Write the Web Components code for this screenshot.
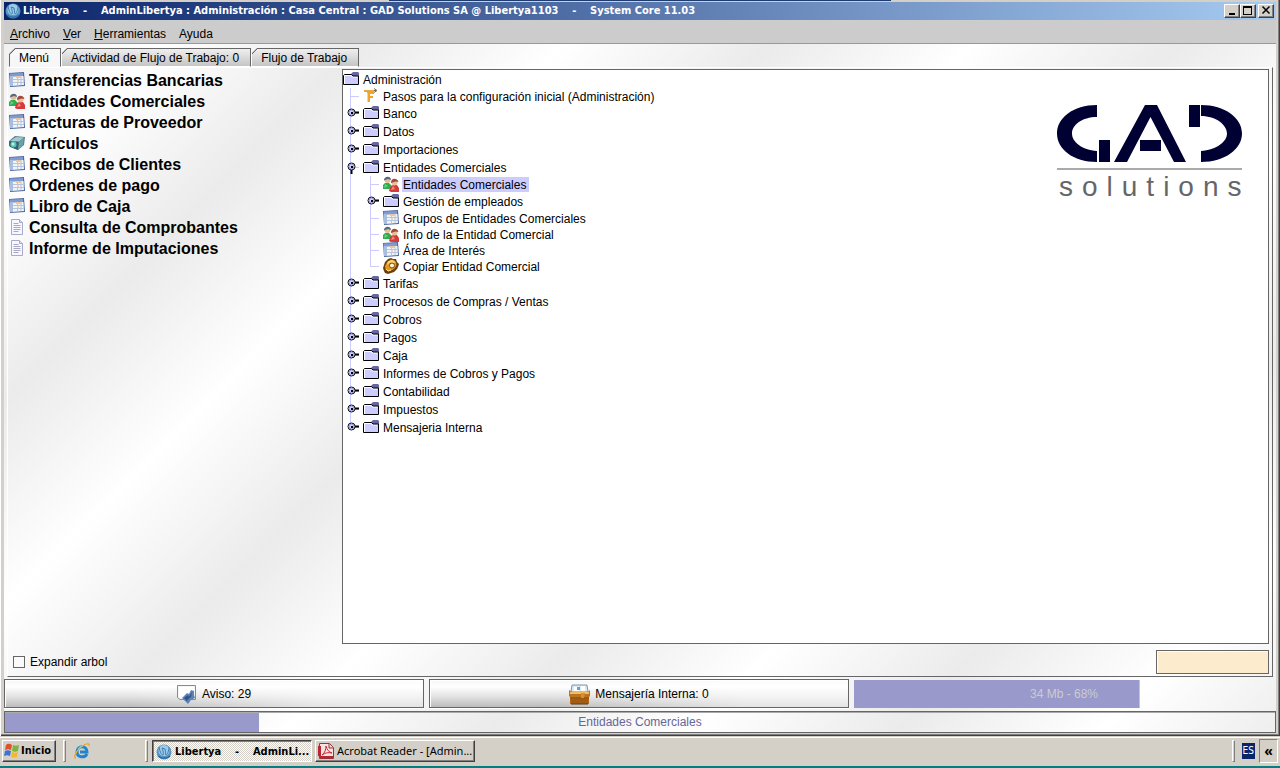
<!DOCTYPE html>
<html lang="es">
<head>
<meta charset="utf-8">
<title>Libertya</title>
<style>
html, body { margin: 0; height: 100%; }
body { background: #008080; font: 12px/16px "Liberation Sans", Arial, sans-serif; color: #000; overflow: hidden; }
</style>
</head>
<body>
<lib-desktop></lib-desktop>

<script>
const ICONS = {
  folder: `<svg viewBox="0 0 16 16" width="16" height="16"><path d="M9 2l1-1h5l1 1v3H8V3z" fill="#6666a0"/><path d="M0.500 14V4.500l1-1h7l1 1.500h6V14z" fill="#ccccff"/><path d="M1.500 13V4.500h6.500l1.500 1.500h5" fill="none" stroke="#fff"/><path d="M0.500 13.500V4.500l1-1h7l1.500 1.500h5.500v8.500z" fill="none" stroke="#000"/></svg>`,
  flow: `<svg viewBox="0 0 16 16" width="16" height="16"><path d="M1 2.500h12M11 .5l3 2-3 2" fill="none" stroke="#776a55"/><path d="M1 3h10" stroke="#e8a640" stroke-width="2"/><path d="M4 4h7v2H7v2h3v2H7v4H4z" fill="#f0a42a"/><path d="M4.500 5v9" stroke="#ffd28a"/></svg>`,
  form: `<svg viewBox="0 0 16 16" width="16" height="16"><path d="M0 1L15 0l1 14L1 15z" fill="#4f69a2"/><path d="M1 1.500l13-.5v3L1 4z" fill="#7f9ad4"/><path d="M2 4.500L14.500 4l.5 9-12.500 1z" fill="#f0f4fa"/><path d="M1 4h3v10H1z" fill="#a9bddf"/><path d="M4 7.500h11M4 10.500h11M8.500 4.500v9M12 4.500v8.500" stroke="#b7c4da"/><path d="M7 4h5v2H7z" fill="#e6c9a0"/><path d="M8 8h2v2H8z" fill="#ecd9a9"/></svg>`,
  people: `<svg viewBox="0 0 16 16" width="16" height="16"><path d="M0 13V9l2-2 4 0 3 3v3z" fill="#2fae50"/><path d="M1 12l1-4 3 2z" fill="#65d07a"/><circle cx="4.500" cy="4" r="3" fill="#e9bc98"/><path d="M1 4.500C.5 0 8-1 8 4L5 3z" fill="#556b82"/><path d="M6 15l1-4 3-2h4l2 3v4H8z" fill="#d63b3b"/><path d="M8 14l2-4 2 3z" fill="#f28c80"/><circle cx="11.500" cy="6.500" r="3" fill="#edbd96"/><path d="M8 7C7.500 2 14 1 15.500 6l-3-.5z" fill="#a3483d"/></svg>`,
  product: `<svg viewBox="0 0 16 16" width="16" height="16"><path d="M0 6l6-5 10 1-1 8-6 5-9-4z" fill="#4c7f8c"/><path d="M1 6l6-4 8 .5-5 4z" fill="#a6c9cf"/><path d="M0 6.500l10 .5-1 8-8-3z" fill="#34616e"/><path d="M10 7l5-4-1 7-5 5z" fill="#6aa2aa"/><circle cx="4.500" cy="9.500" r="3" fill="#56c4b4"/><circle cx="4" cy="9" r="1.500" fill="#bdeee2"/></svg>`,
  page: `<svg viewBox="0 0 16 16" width="16" height="16"><path d="M2.500.5h8l3 3v12h-11z" fill="#f7f7ff" stroke="#a9a9cb"/><path d="M10.500.5v3h3" fill="#d8d8f0" stroke="#a9a9cb"/><path d="M4.500 4.500h5M4.500 6.500h7M4.500 8.500h7M4.500 10.500h7M4.500 12.500h5" stroke="#a8a8c4"/></svg>`,
  gear: `<svg viewBox="0 0 16 16" width="16" height="16"><path d="M5 1l3-1 2 1h3l1 3 2 2-1 3-1 2-3 3-3 1-3 1-3-1-1-2-1-3 1-3 1-3z" fill="#6b3c0c"/><path d="M8 1.500l3 .5 2 2 .5 3-1.500 3-2.500 2-4 1.500-3-2L2 8l2.500-4.500z" fill="#dc9a22"/><path d="M5 3.500l4-1.500 3 2-1 1-4-.5-3 2.500z" fill="#ffdc76"/><circle cx="9" cy="7.500" r="2.500" fill="#fff3d6" stroke="#7b4a10"/><path d="M3 11l2 2 3-1" stroke="#ffe089" fill="none"/></svg>`,
  globe: `<svg viewBox="0 0 16 16" width="16" height="16"><circle cx="8" cy="8" r="7.500" fill="#5596c6"/><circle cx="8" cy="6.500" r="5.500" fill="#9ccbea"/><path d="M3 3c1 6 3 8 4 8s0-5-1-7l3 1c1 3 0 6 1 6s3-4 3-8" fill="none" stroke="#3f7cab" stroke-width="1"/><path d="M2 12c3 3 9 3 12 0" stroke="#2d6da0" fill="none" stroke-width="1.500"/></svg>`,
  notice: `<svg viewBox="0 0 20 20" width="20" height="20"><path d="M.5 1.500h18v14H3l-2.500-2z" fill="#f5f6f8" stroke="#858b92"/><path d="M2 3h15v8L2 13z" fill="#fff"/><path d="M5 14l5-5 2 1 2-4 3 1v4l1 3-4 2-3 4-3-3z" fill="#5d83b4"/><path d="M7 14l4-3 1 2 3-5-1 5-3 2-1 2z" fill="#2e5386"/></svg>`,
  mailbox: `<svg viewBox="0 0 21 21" width="21" height="21"><path d="M3 1h15l1 7H2z" fill="#dce8f2" stroke="#8095a8"/><path d="M5 3h5v4H5zM12 2h4v5h-4z" fill="#fff"/><path d="M8 3h3v3H8z" fill="#6ba0cb"/><path d="M0 6l3 2h16l2-2v6l-1 1v7H1v-7l-1-1z" fill="#bd741c"/><path d="M1 8h19v2H1z" fill="#f0bd60"/><path d="M1 14h19" stroke="#74400b"/><path d="M1.500 15h18v4.500h-18z" fill="#a45c13"/><path d="M12 9h4l-1 5h-3z" fill="#db8e2d"/><path d="M2 20h17" stroke="#593209"/></svg>`,
  winflag: `<svg viewBox="0 0 16 16" width="16" height="16"><path d="M2 2c2-2 4-1 6 0L7 7C5 6 3 6 1 7z" fill="#e0512b"/><path d="M9 2c2 1 4 1 6 0l-1 6c-2 1-4 1-6 0z" fill="#7cb53b"/><path d="M1 8c2-1 3-1 6 0l-1 5c-2-1-4-1-6 0z" fill="#3d74cf"/><path d="M8 9c2 1 4 1 6 0l-1 5c-2 1-4 1-6 0z" fill="#f2b92e"/></svg>`,
  ie: `<svg viewBox="0 0 16 16" width="16" height="16"><path d="M13 11c-2 4-10 4-10-2 0-7 10-7 10 0H6" fill="none" stroke="#2284cc" stroke-width="3"/><path d="M2 15c-3 0 0-7 5-11s9-4 8-1" fill="none" stroke="#e6ae28" stroke-width="1.500"/><path d="M4 6c1-2 3-3 5-3" stroke="#82ccec" fill="none"/></svg>`,
  acrobat: `<svg viewBox="0 0 16 16" width="16" height="16"><path d="M1.500.5h10l4 4v11h-14z" fill="#f6e4e4" stroke="#96343a"/><path d="M0 3h3v10H0z" fill="#b8272d"/><path d="M2 13h13v2H2z" fill="#b8272d"/><path d="M11 1v4h4" fill="#ddd" stroke="#96343a"/><path d="M4 12c3-2 4-6 4-9 1 4 3 6 6 7-4-1-7 0-10 2z" fill="none" stroke="#c42b30"/></svg>`,
  min: `<svg viewBox="0 0 12 10" width="12" height="10"><path d="M3 8h6v2H3z"/></svg>`,
  max: `<svg viewBox="0 0 12 10" width="12" height="10"><path d="M1 1h9v9H1zM2 3v6h7V3z" fill-rule="evenodd"/></svg>`,
  close: `<svg viewBox="0 0 12 10" width="12" height="10"><path d="M2.500 1.500l7 7M9.500 1.500l-7 7" stroke="#000" stroke-width="1.500"/></svg>`,
  handle: `<svg viewBox="0 0 14 9" width="14" height="9"><path d="M8 4.500h4" stroke="#000" stroke-width="2"/><circle cx="4.500" cy="4.500" r="3.500" fill="#ccccff" stroke="#000"/><circle cx="4.500" cy="4.500" r="2.500" fill="none" stroke="#9999cc"/><path d="M4 4h2v2H4z"/></svg>`,
  handleopen: `<svg viewBox="0 0 9 14" width="9" height="14"><path d="M4.500 8v4" stroke="#000" stroke-width="2"/><circle cx="4.500" cy="4.500" r="3.500" fill="#ccccff" stroke="#000"/><circle cx="4.500" cy="4.500" r="2.500" fill="none" stroke="#9999cc"/><path d="M4 4h2v2H4z"/></svg>`
};

function define(name, html, setup) {
  const tpl = document.createElement('template');
  tpl.innerHTML = html;
  customElements.define(name, class extends HTMLElement {
    connectedCallback() {
      if (this.shadowRoot) return;
      const root = this.attachShadow({ mode: 'open' });
      root.append(tpl.content.cloneNode(true));
      if (setup) setup(this, root);
    }
  });
}

define('lib-icon', `<style>:host{display:inline-flex;flex:none} svg{display:block}</style><span></span>`,
  (el, root) => { root.querySelector('span').innerHTML = ICONS[el.getAttribute('name')]; });

define('lib-titlebar', `<style>
  :host{display:flex;align-items:center;height:18px;padding:0 2px 0 1px;gap:2px;color:#fff;
    background:linear-gradient(90deg,#0a246a,#a6caf0);font:bold 11px/18px "DejaVu Sans Condensed","DejaVu Sans",sans-serif}
  h1{margin:0;flex:1;font:inherit;white-space:pre;overflow:hidden}
  .controls{display:flex}
  button{box-sizing:border-box;width:16px;height:14px;padding:0 0 0 1px;display:flex;background:#d4d0c8;
    border:1px solid;border-color:#fff #404040 #404040 #fff;box-shadow:inset -1px -1px #808080}
  button:last-child{margin-left:2px}
</style>
<lib-icon name="globe"></lib-icon><h1><slot></slot></h1>
<div class="controls">
  <button aria-label="Minimizar"><lib-icon name="min"></lib-icon></button>
  <button aria-label="Maximizar"><lib-icon name="max"></lib-icon></button>
  <button aria-label="Cerrar"><lib-icon name="close"></lib-icon></button>
</div>`);

define('lib-menubar', `<style>
  :host{display:flex;height:23px;background:#ccc;border-bottom:1px solid #999;padding-left:6px;gap:13px}
  button{border:0;background:none;padding:2px 0 0;font:12px/24px "Liberation Sans",Arial,sans-serif;color:#000}
  u{text-underline-offset:1px}
</style>
<button><u>A</u>rchivo</button><button><u>V</u>er</button><button><u>H</u>erramientas</button><button>Ayuda</button>`);

define('lib-tabs', `<style>
  :host{display:flex;height:19px;padding:4px 0 0 5px}
  button{box-sizing:border-box;height:19px;border:1px solid #666;border-bottom-color:#fff;border-left-color:#fff;padding:1px 11px 0 9px;
    font:12px/17px "Liberation Sans",Arial,sans-serif;color:#000;
    background:linear-gradient(135deg,transparent 4px,#666 4px 5px,transparent 5px) border-box,linear-gradient(#f2f2f2,#c2c2c2) border-box;
    clip-path:polygon(6px 0,100% 0,100% 100%,0 100%,0 6px)}
  button[aria-selected=true]{border-bottom-color:transparent;border-left-color:#666;
    background:linear-gradient(135deg,transparent 4px,#666 4px 5px,transparent 5px) border-box,#f7f7f7 border-box}
</style>
<button role="tab" aria-selected="true">Menú</button><button role="tab">Actividad de Flujo de Trabajo: 0</button><button role="tab">Flujo de Trabajo</button>`);

define('lib-favorite', `<style>
  :host{display:block}
  a{display:flex;align-items:center;gap:4px;height:21px;color:#000;text-decoration:none;font:bold 16px/20px "Liberation Sans",Arial,sans-serif;white-space:nowrap}
  span{padding-top:2px}
</style><a href="#"><lib-icon></lib-icon><span><slot></slot></span></a>`,
  (el, root) => {
    const icon = document.createElement('lib-icon');
    icon.setAttribute('name', el.getAttribute('icon'));
    root.querySelector('lib-icon').replaceWith(icon);
  });

define('tree-node', `<style>
  :host{display:block;background:linear-gradient(#ccccff,#ccccff) 7px 0/1px 100% no-repeat}
  :host(:last-child){background-size:1px 9px}
  :host([root]){background:none}
  .row{display:flex;align-items:center;height:16px}
  :host([icon=folder]) .row{height:18px}
  .lead{width:20px;height:100%;flex:none;display:flex;align-items:center;
    background:linear-gradient(#ccccff,#ccccff) 8px 50%/8px 1px no-repeat}
  .lead lib-icon{padding:0 0 2px 4px}
  .lead lib-icon[name=handleopen]{padding:5px 0 2px 4px}
  :host([root]) .lead{display:none}
  .label{margin-left:3px;padding:2px 3px 0 1px;line-height:13px;white-space:nowrap}
  :host([selected]) .label{background:#ccccff}
  .kids{margin-left:20px}
  :host([root]) .kids{margin-left:0}
</style>
<div class="row" role="treeitem"><span class="lead"></span><span class="label"></span></div>
<div class="kids" role="group"><slot></slot></div>`,
  (el, root) => {
    const add = (name, parent, before) => {
      const i = document.createElement('lib-icon');
      i.setAttribute('name', name);
      parent.insertBefore(i, before);
    };
    const row = root.querySelector('.row'), label = root.querySelector('.label');
    label.textContent = el.getAttribute('label');
    add(el.getAttribute('icon'), row, label);
    if (el.getAttribute('icon') === 'folder' && !el.hasAttribute('root'))
      add(el.hasAttribute('open') ? 'handleopen' : 'handle', root.querySelector('.lead'), null);
  });

define('gad-logo', `<style>
  :host{display:block;width:190px}
  svg{display:block}
  .word{display:block;font:28px/34px "Liberation Sans",Arial,sans-serif;letter-spacing:9px;color:#666;white-space:nowrap;padding-left:2px}
</style>
<svg width="186" height="65" viewBox="0 0 186 65" fill="#000033" role="img" aria-label="GAD">
  <path d="M40 0v12C25 12 15 20 15 28.500S25 45 40 46v11C16 57 0 44 0 28.500S16 0 40 0z"/>
  <path d="M42 35h11v22H42z"/>
  <path d="M88 0h12l29 57h-12L93.500 12 70 57H57z"/>
  <path d="M83 35h21v11H83z"/>
  <path d="M132 0h11v22h-11z"/>
  <path d="M144 0c24 0 41 13 41 28.500S168 57 144 57V46c15-1 26-9 26-17.500S159 11 144 11z"/>
  <path d="M0 63h185v2H0z" fill="#aaa"/>
</svg>
<span class="word">solutions</span>`);

define('lib-workspace', `<style>
  :host{display:flex;flex-direction:column;min-height:0;border:1px solid;border-color:#fff #666 #666 #fff;padding:1px 3px 2px 1px;margin:0 3px 2px 3px}
  .main{flex:1;min-height:0;display:grid;grid-template-columns:333px minmax(0,1fr)}
  nav{display:block}
  .tree{border:1px solid #666;background:#fff;display:flex;justify-content:space-between;align-items:flex-start;overflow:hidden}
  gad-logo{margin:35px 21px 0 0;flex:none}
  .foot{display:flex;align-items:center;justify-content:space-between;padding-top:6px}
  label{display:flex;align-items:center;gap:5px;padding-left:4px}
  input[type=checkbox]{appearance:none;box-sizing:border-box;margin:0;width:12px;height:12px;border:1px solid #666;background:#fafafa}
  input[type=text]{box-sizing:border-box;width:113px;height:24px;border:1px solid #666;background:#fdebcd;box-shadow:inset 1px 1px #fff}
</style>
<div class="main">
<nav aria-label="Favoritos">
  <lib-favorite icon="form">Transferencias Bancarias</lib-favorite>
  <lib-favorite icon="people">Entidades Comerciales</lib-favorite>
  <lib-favorite icon="form">Facturas de Proveedor</lib-favorite>
  <lib-favorite icon="product">Artículos</lib-favorite>
  <lib-favorite icon="form">Recibos de Clientes</lib-favorite>
  <lib-favorite icon="form">Ordenes de pago</lib-favorite>
  <lib-favorite icon="form">Libro de Caja</lib-favorite>
  <lib-favorite icon="page">Consulta de Comprobantes</lib-favorite>
  <lib-favorite icon="page">Informe de Imputaciones</lib-favorite>
</nav>
<div class="tree" role="tree">
  <tree-node root open icon="folder" label="Administración">
    <tree-node icon="flow" label="Pasos para la configuración inicial (Administración)"></tree-node>
    <tree-node icon="folder" label="Banco"></tree-node>
    <tree-node icon="folder" label="Datos"></tree-node>
    <tree-node icon="folder" label="Importaciones"></tree-node>
    <tree-node icon="folder" open label="Entidades Comerciales">
      <tree-node icon="people" selected label="Entidades Comerciales"></tree-node>
      <tree-node icon="folder" label="Gestión de empleados"></tree-node>
      <tree-node icon="form" label="Grupos de Entidades Comerciales"></tree-node>
      <tree-node icon="people" label="Info de la Entidad Comercial"></tree-node>
      <tree-node icon="form" label="Área de Interés"></tree-node>
      <tree-node icon="gear" label="Copiar Entidad Comercial"></tree-node>
    </tree-node>
    <tree-node icon="folder" label="Tarifas"></tree-node>
    <tree-node icon="folder" label="Procesos de Compras / Ventas"></tree-node>
    <tree-node icon="folder" label="Cobros"></tree-node>
    <tree-node icon="folder" label="Pagos"></tree-node>
    <tree-node icon="folder" label="Caja"></tree-node>
    <tree-node icon="folder" label="Informes de Cobros y Pagos"></tree-node>
    <tree-node icon="folder" label="Contabilidad"></tree-node>
    <tree-node icon="folder" label="Impuestos"></tree-node>
    <tree-node icon="folder" label="Mensajeria Interna"></tree-node>
  </tree-node>
  <gad-logo></gad-logo>
</div>
</div>
<div class="foot">
  <label><input type="checkbox">Expandir arbol</label>
  <input type="text" aria-label="Buscar">
</div>`);

define('lib-status', `<style>
  :host{display:block}
  .cells{display:grid;grid-template-columns:repeat(3,minmax(0,1fr));gap:5px;height:29px;padding-right:2px}
  button{display:flex;align-items:center;justify-content:center;gap:5px;padding:1px 0 0;color:#000;
    font:12px/16px "Liberation Sans",Arial,sans-serif;border:1px solid #666;box-shadow:inset 1px 1px #fff,0 1px #fff;
    background:linear-gradient(90deg,transparent 30%,rgba(255,255,255,.6) 75%),linear-gradient(#f6f6f6,#fff 25%,#e4e4e4 60%,#bcbcbc)}
  .mem{margin-top:1px;display:flex;align-items:center;justify-content:center;color:#ccc;
    background:linear-gradient(#9999cc,#9999cc) 0 0/68% 100% no-repeat}
  .bar{display:flex;align-items:center;justify-content:center;margin-top:3px;height:20px;border:1px solid #666;color:#666699;
    box-shadow:inset 0 1px #aaa;background:linear-gradient(#9999cc,#9999cc) 0 0/20% 100% no-repeat}
</style>
<div class="cells">
  <button><lib-icon name="notice"></lib-icon>Aviso: 29</button>
  <button><lib-icon name="mailbox"></lib-icon>Mensajería Interna: 0</button>
  <div class="mem" role="meter" aria-label="Memoria" aria-valuenow="68">34 Mb - 68%</div>
</div>
<div class="bar" role="status">Entidades Comerciales</div>`);

define('lib-window', `<style>
  :host{display:flex;flex-direction:column;min-height:0;background:#d4d0c8;padding:2px 4px 3px;box-shadow:inset 1px 0 #fff,inset -1px -1px #404040,inset -2px -2px #808080}
  .client{flex:1;min-height:0;display:flex;flex-direction:column;
    background:repeating-linear-gradient(135deg,#ffffff -178px,#ebebeb -34px,#ffffff 110px)}
  lib-workspace{flex:1}
</style>
<lib-titlebar>Libertya    -    AdminLibertya : Administración : Casa Central : GAD Solutions SA @ Libertya1103    -    System Core 11.03</lib-titlebar>
<lib-menubar></lib-menubar>
<div class="client">
  <lib-tabs></lib-tabs>
  <lib-workspace></lib-workspace>
  <lib-status></lib-status>
</div>`);

define('lib-taskbar', `<style>
  :host{box-sizing:border-box;display:flex;align-items:center;height:30px;padding:0 2px;background:#d4d0c8;box-shadow:inset 0 1px #d4d0c8,inset 0 2px #fff;
    font:11px/16px "Noto Sans","DejaVu Sans Condensed",sans-serif}
  button{box-sizing:border-box;height:22px;display:flex;align-items:center;gap:3px;padding:0 2px;background:#d4d0c8;color:#000;font:inherit;white-space:pre;
    border:1px solid;border-color:#fff #404040 #404040 #fff;box-shadow:inset -1px -1px #808080}
  .start{width:54px;gap:1px;padding:0 1px;font:bold 11px/16px "DejaVu Sans Condensed",sans-serif}
  .tasks{display:flex;gap:3px;margin-left:4px;flex:1}
  .task{width:160px;padding:0 2px}
  .task[aria-pressed]{border-color:#404040 #fff #fff #404040;box-shadow:inset 1px 1px #808080;padding:1px 3px 0;font:bold 11px/16px "DejaVu Sans Condensed",sans-serif;
    background:repeating-conic-gradient(#fff 0 25%,#d4d0c8 0 50%) 0 0/2px 2px}
  .sep{width:1px;height:20px;border:1px solid;border-color:#fff #808080 #808080 #fff}
  .quick{width:71px;display:flex;padding:0 0 0 8px;box-sizing:border-box;flex:none}
  .start + .sep{margin-left:7px}
  .quick{width:79px}
  .lang{margin:0 4px 0 7px;padding:0 1px;height:16px;background:#0a246a;color:#fff;font:10px/16px "DejaVu Sans Condensed",sans-serif}
  .more{width:19px;height:24px;padding:0;justify-content:center;border-color:#808080 #fff #fff #808080;box-shadow:none;font-weight:bold;font-size:14px}
</style>
<button class="start"><lib-icon name="winflag"></lib-icon>Inicio</button>
<span class="sep"></span>
<span class="quick"><lib-icon name="ie"></lib-icon></span>
<span class="sep"></span>
<div class="tasks">
  <button class="task" aria-pressed="true"><lib-icon name="globe"></lib-icon>Libertya    -    AdminLi...</button>
  <button class="task"><lib-icon name="acrobat"></lib-icon>Acrobat Reader - [Admin...</button>
</div>
<span class="sep"></span><span class="lang">ES</span><button class="more">«</button>`);

define('lib-desktop', `<style>
  :host{display:flex;flex-direction:column;box-sizing:border-box;height:100vh;padding-bottom:2px}
  lib-window{flex:1}
  .behind{position:absolute;top:0;left:389px;right:389px;height:1px;background:#1f3c6e}
</style><lib-window></lib-window><lib-taskbar></lib-taskbar><div class="behind"></div>`);
</script>
</body>
</html>
